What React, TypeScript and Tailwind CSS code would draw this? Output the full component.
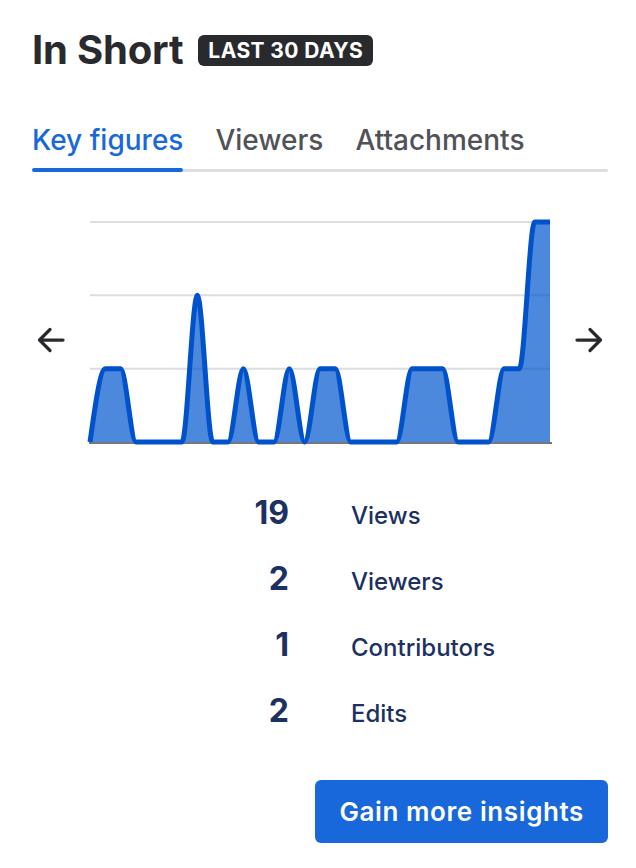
import { useState } from "react";

const FONT = { fontFamily: "Inter, 'Noto Sans', sans-serif" };

const DATA = [0, 1, 1, 0, 0, 0, 0, 2, 0, 0, 1, 0, 0, 1, 0, 1, 1, 0, 0, 0, 0, 1, 1, 1, 0, 0, 0, 1, 1, 3, 3];

const CHART_W = 460;
const CHART_H = 280;
const BASE_Y = 242;
const STEP_Y = 73.33;

// d3-style monotoneX curve through the points
function monotonePath(pts: [number, number][]) {
  const n = pts.length;
  const slopes: number[] = [];
  for (let i = 0; i < n - 1; i++) {
    const h = pts[i + 1][0] - pts[i][0];
    slopes.push((pts[i + 1][1] - pts[i][1]) / h);
  }
  const t: number[] = new Array(n).fill(0);
  for (let i = 1; i < n - 1; i++) {
    const s0 = slopes[i - 1];
    const s1 = slopes[i];
    if (s0 * s1 <= 0) {
      t[i] = 0;
    } else {
      const h0 = pts[i][0] - pts[i - 1][0];
      const h1 = pts[i + 1][0] - pts[i][0];
      const p = (s0 * h1 + s1 * h0) / (h0 + h1);
      t[i] = (Math.sign(s0) + Math.sign(s1)) * Math.min(Math.abs(s0), Math.abs(s1), 0.5 * Math.abs(p));
    }
  }
  t[0] = (3 * slopes[0] - t[1]) / 2;
  t[n - 1] = (3 * slopes[n - 2] - t[n - 2]) / 2;

  let d = `M${pts[0][0]},${pts[0][1]}`;
  for (let i = 0; i < n - 1; i++) {
    const [x0, y0] = pts[i];
    const [x1, y1] = pts[i + 1];
    const dx = (x1 - x0) / 3;
    d += ` C${x0 + dx},${y0 + dx * t[i]} ${x1 - dx},${y1 - dx * t[i + 1]} ${x1},${y1}`;
  }
  return d;
}

function ViewsChart() {
  const pts: [number, number][] = DATA.map((v, i) => [(i * CHART_W) / (DATA.length - 1), BASE_Y - v * STEP_Y]);
  const line = monotonePath(pts);
  const area = `${line} L${CHART_W},${BASE_Y} L0,${BASE_Y} Z`;

  return (
    <svg width={CHART_W} height={CHART_H} viewBox={`0 0 ${CHART_W} ${CHART_H}`} className="overflow-visible">
      {[1, 2, 3].map((v) => (
        <line key={v} x1={0} x2={CHART_W} y1={BASE_Y - v * STEP_Y} y2={BASE_Y - v * STEP_Y} stroke="#dcdde0" strokeWidth={2} />
      ))}
      <path d={area} fill="#0055cc" fillOpacity={0.7} />
      <line x1={-1} x2={CHART_W + 2} y1={BASE_Y + 1} y2={BASE_Y + 1} stroke="#75777d" strokeWidth={2} />
      <path d={line} fill="none" stroke="#0052cc" strokeWidth={5} strokeLinejoin="round" />
    </svg>
  );
}

function Arrow({ dir }: { dir: "left" | "right" }) {
  return (
    <button className="flex h-[26px] w-[28px] items-center justify-center text-[#292a2e]">
      <svg width="28" height="26" viewBox="0 0 28 26" fill="none" stroke="currentColor" strokeWidth={3.25} strokeLinecap="round" strokeLinejoin="round">
        {dir === "left" ? (
          <path d="M26 13H2.5M13 2.5L2.5 13L13 23.5" />
        ) : (
          <path d="M2 13H25.5M15 2.5L25.5 13L15 23.5" />
        )}
      </svg>
    </button>
  );
}

const TABS = ["Key figures", "Viewers", "Attachments"];

const STATS = [
  { value: 19, label: "Views" },
  { value: 2, label: "Viewers" },
  { value: 1, label: "Contributors" },
  { value: 2, label: "Edits" },
];

export default function App() {
  const [active, setActive] = useState(0);

  return (
    <div className="flex min-h-[868px] w-[636px] flex-col bg-white pl-8 pr-7 pt-[26px]" style={FONT}>
      <header className="flex h-12 items-center">
        <h1 className="text-[40px] font-bold leading-[48px] tracking-[-0.2px] text-[#292a2e]">In Short</h1>
        <span className="ml-[15px] flex h-[31px] items-center rounded-[6px] bg-[#292a2e] px-[10px] text-[21px] font-bold leading-none tracking-[0.4px] text-white">
          LAST 30 DAYS
        </span>
      </header>

      <nav className="mt-[49px] flex flex-col">
        <div className="flex gap-[32px]">
          {TABS.map((tab, i) => (
            <button
              key={tab}
              onClick={() => setActive(i)}
              className={`text-[28px] font-medium leading-[34px] ${i === active ? "text-[#1868db]" : "text-[#505258]"}`}
            >
              {tab}
            </button>
          ))}
        </div>
        <div className="mt-[11px] flex h-1 items-end">
          <div className="h-1 w-[151px] rounded-full bg-[#1868db]" />
          <div className="h-[3px] flex-1 rounded-r-full bg-[#dddee1]" />
        </div>
      </nav>

      <div className="mt-[28px] flex items-center justify-between px-[5px]">
        <Arrow dir="left" />
        <ViewsChart />
        <Arrow dir="right" />
      </div>

      <div className="mt-[13px] flex flex-col text-[#1c3161]">
        {STATS.map((s) => (
          <div key={s.label} className="flex h-[66px] items-baseline">
            <span className="w-[257px] text-right text-[32px] font-bold leading-[40px]">{s.value}</span>
            <span className="ml-[62px] text-[24px] font-medium leading-[40px]">{s.label}</span>
          </div>
        ))}
      </div>

      <button className="mt-[23px] h-[63px] self-end rounded-[6px] bg-[#1868db] px-6 text-[26px] font-semibold tracking-[0.6px] text-white">
        Gain more insights
      </button>
    </div>
  );
}
